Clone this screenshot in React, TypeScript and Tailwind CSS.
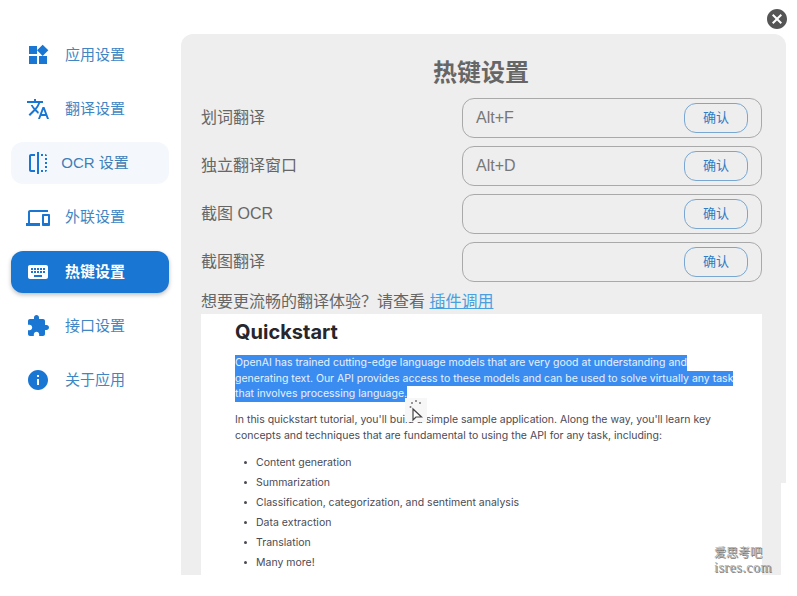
import React from 'react';

const cjk = '"Liberation Sans", "Noto Sans CJK SC", sans-serif';

const paths = {
  widgets: 'M13 13v8h8v-8h-8zM3 21h8v-8H3v8zM3 3v8h8V3H3zm13.66-1.31L11 7.34 16.66 13l5.66-5.66-5.66-5.65z',
  translate:
    'M12.87 15.07l-2.54-2.51.03-.03c1.74-1.94 2.98-4.17 3.71-6.53H17V4h-7V2H8v2H1v1.99h11.17C11.5 7.92 10.44 9.75 9 11.35 8.07 10.32 7.3 9.19 6.69 8h-2c.73 1.63 1.73 3.17 2.98 4.56l-5.09 5.02L4 19l5-5 3.11 3.11.76-2.04zM18.5 10h-2L12 22h2l1.12-3h4.75L21 22h2l-4.5-12zm-2.62 7l1.62-4.33L19.12 17h-3.24z',
  flip: 'M15 21h2v-2h-2v2zm4-12h2V7h-2v2zM3 5v14c0 1.1.9 2 2 2h4v-2H5V5h4V3H5c-1.1 0-2 .9-2 2zm16-2v2h2c0-1.1-.9-2-2-2zm-8 20h2V1h-2v22zm8-6h2v-2h-2v2zM15 5h2V3h-2v2zm4 8h2v-2h-2v2zm0 8c1.1 0 2-.9 2-2h-2v2z',
  devices:
    'M4 6h18V4H4c-1.1 0-2 .9-2 2v11H0v3h14v-3H4V6zm19 2h-6c-.55 0-1 .45-1 1v10c0 .55.45 1 1 1h6c.55 0 1-.45 1-1V9c0-.55-.45-1-1-1zm-1 9h-4v-7h4v7z',
  keyboard:
    'M20 5H4c-1.1 0-1.99.9-1.99 2L2 17c0 1.1.9 2 2 2h16c1.1 0 2-.9 2-2V7c0-1.1-.9-2-2-2zm-9 3h2v2h-2V8zm0 3h2v2h-2v-2zM8 8h2v2H8V8zm0 3h2v2H8v-2zm-1 2H5v-2h2v2zm0-3H5V8h2v2zm9 7H8v-2h8v2zm0-4h-2v-2h2v2zm0-3h-2V8h2v2zm3 3h-2v-2h2v2zm0-3h-2V8h2v2z',
  extension:
    'M20.5 11H19V7c0-1.1-.9-2-2-2h-4V3.5C13 2.12 11.88 1 10.5 1S8 2.12 8 3.5V5H4c-1.1 0-1.99.9-1.99 2v3.8H3.5c1.49 0 2.7 1.21 2.7 2.7s-1.21 2.7-2.7 2.7H2V20c0 1.1.9 2 2 2h3.8v-1.5c0-1.49 1.21-2.7 2.7-2.7 1.49 0 2.7 1.21 2.7 2.7V22H17c1.1 0 2-.9 2-2v-4h1.5c1.38 0 2.5-1.12 2.5-2.5S21.88 11 20.5 11z',
  info: 'M12 2C6.48 2 2 6.48 2 12s4.48 10 10 10 10-4.48 10-10S17.52 2 12 2zm1 15h-2v-6h2v6zm0-8h-2V7h2v2z',
  cancel:
    'M12 2C6.47 2 2 6.47 2 12s4.47 10 10 10 10-4.47 10-10S17.53 2 12 2zm5 13.59L15.59 17 12 13.41 8.41 17 7 15.59 10.59 12 7 8.41 8.41 7 12 10.59 15.59 7 17 8.41 13.41 12 17 15.59z',
};

const Icon = ({ d, className }: { d: string; className?: string }) => (
  <svg viewBox="0 0 24 24" fill="currentColor" className={className}>
    <path d={d} />
  </svg>
);

const navItems = [
  { label: '应用设置', icon: paths.widgets },
  { label: '翻译设置', icon: paths.translate },
  { label: 'OCR 设置', icon: paths.flip, hover: true },
  { label: '外联设置', icon: paths.devices },
  { label: '热键设置', icon: paths.keyboard, active: true },
  { label: '接口设置', icon: paths.extension },
  { label: '关于应用', icon: paths.info },
];

const hotkeys = [
  { label: '划词翻译', value: 'Alt+F' },
  { label: '独立翻译窗口', value: 'Alt+D' },
  { label: '截图 OCR', value: '' },
  { label: '截图翻译', value: '' },
];

const bullets = [
  'Content generation',
  'Summarization',
  'Classification, categorization, and sentiment analysis',
  'Data extraction',
  'Translation',
  'Many more!',
];

const selected = [
  'OpenAI has trained cutting-edge language models that are very good at understanding and',
  'generating text. Our API provides access to these models and can be used to solve virtually any task',
  'that involves processing language.',
];

const SidebarItem = ({ label, icon, hover, active }: { label: string; icon: string; hover?: boolean; active?: boolean }) => (
  <div
    className={`flex h-[42px] items-center rounded-xl ${
      active
        ? 'bg-[#1976d2] font-bold text-white shadow-[0_2px_4px_rgba(0,0,0,0.25)]'
        : hover
          ? 'bg-[#f4f8fc] text-[#3f7fb8]'
          : 'text-[#3f86c4]'
    }`}
  >
    <Icon d={icon} className={`ml-[15px] h-6 w-6 shrink-0 ${active ? 'text-white' : 'text-[#1976d2]'}`} />
    <span className="ml-[9px] w-[72px] whitespace-nowrap text-center text-[15px]">{label}</span>
  </div>
);

const HotkeyRow = ({ label, value }: { label: string; value: string }) => (
  <div className="flex h-10 items-center">
    <div className="w-[261px] text-base text-[#666666]">{label}</div>
    <div className="flex h-10 w-[300px] items-center justify-between rounded-xl border border-[#a9a9a9] pl-[13px] pr-[13px]">
      <span className="text-base text-[#777777]">{value}</span>
      <button className="flex h-[30px] w-[64px] items-center justify-center rounded-xl border border-[#7aa7d2] text-[13px] text-[#2f7cc4]">
        确认
      </button>
    </div>
  </div>
);

// screenshot of the docs page shown under the hotkey form
const DocPreview = () => (
  <div className="relative h-[261px] w-[561px] overflow-hidden bg-white pl-[34px] text-[10.5px] leading-[15.7px] text-[#4a4a55]" style={{ fontFamily: 'Inter, sans-serif' }}>
    <h3 className="pt-[5px] text-[20px] font-bold leading-[26px] text-[#26262c]">Quickstart</h3>
    <div className="mt-[10px]">
      {selected.map((line) => (
        <div key={line} className="w-fit whitespace-nowrap bg-[#3b8cf0] text-[#e8f1fd]">
          {line}
        </div>
      ))}
    </div>
    <p className="mt-[10px] whitespace-nowrap">In this quickstart tutorial, you'll build a simple sample application. Along the way, you'll learn key</p>
    <p className="whitespace-nowrap">concepts and techniques that are fundamental to using the API for any task, including:</p>
    <ul className="mt-[11px] flex flex-col gap-[4.3px] pl-[21px]">
      {bullets.map((item) => (
        <li key={item} className="relative whitespace-nowrap">
          <span className="absolute left-[-12px] top-[6px] h-[3px] w-[3px] rounded-full bg-[#4a4a55]" />
          {item}
        </li>
      ))}
    </ul>
    {/* loading cursor */}
    <svg viewBox="0 0 22 24" className="absolute left-[204px] top-[84px] h-6 w-[22px]">
      <rect width="22" height="24" fill="#f7f7f7" />
      <g fill="#777777">
        <circle cx="7" cy="5" r="1" />
        <circle cx="11" cy="3" r="1" />
        <circle cx="15" cy="5" r="1" />
        <circle cx="5.5" cy="9" r="1" />
      </g>
      <path d="M8 11v11l3-3h5.5z" fill="#ffffff" stroke="#444444" strokeWidth="1.2" />
    </svg>
  </div>
);

export default function App() {
  return (
    <div className="relative flex h-[596px] w-[797px] overflow-hidden bg-white" style={{ fontFamily: cjk }}>
      <aside className="flex w-[181px] shrink-0 flex-col gap-[12.2px] pl-[11px] pr-3 pt-[34px]">
        {navItems.map((item) => (
          <SidebarItem key={item.label} {...item} />
        ))}
      </aside>

      <main className="mt-[34px] h-[541px] w-[605px] rounded-t-xl bg-[#eeeeee] pl-5">
        <h2 className="h-16 w-[560px] pt-[22px] text-center text-2xl font-bold leading-[34px] text-[#666666]">热键设置</h2>
        <div className="flex flex-col gap-2">
          {hotkeys.map((row) => (
            <HotkeyRow key={row.label} {...row} />
          ))}
        </div>
        <div className="h-8 pt-2 text-base leading-6 text-[#666666]">
          想要更流畅的翻译体验？请查看 <a className="text-[#4a9fdf] underline">插件调用</a>
        </div>
        <DocPreview />
      </main>

      {/* close button */}
      <Icon d={paths.cancel} className="absolute left-[765px] top-[7px] h-6 w-6 text-[#555555]" />

      {/* patch + watermark stamped over the screenshot */}
      <div className="absolute left-[781px] top-[483px] h-[92px] w-[5px] bg-white" />
      <div className="absolute left-[714px] top-[545px] text-[#b0b0b0] [text-shadow:1px_1px_0_#777777]" style={{ fontFamily: '"Liberation Serif", "Noto Sans CJK SC", serif' }}>
        <div className="text-[12px] leading-[16px]">爱思考吧</div>
        <div className="text-[14px] leading-[14px] tracking-[0.5px]">isres.com</div>
      </div>
    </div>
  );
}
